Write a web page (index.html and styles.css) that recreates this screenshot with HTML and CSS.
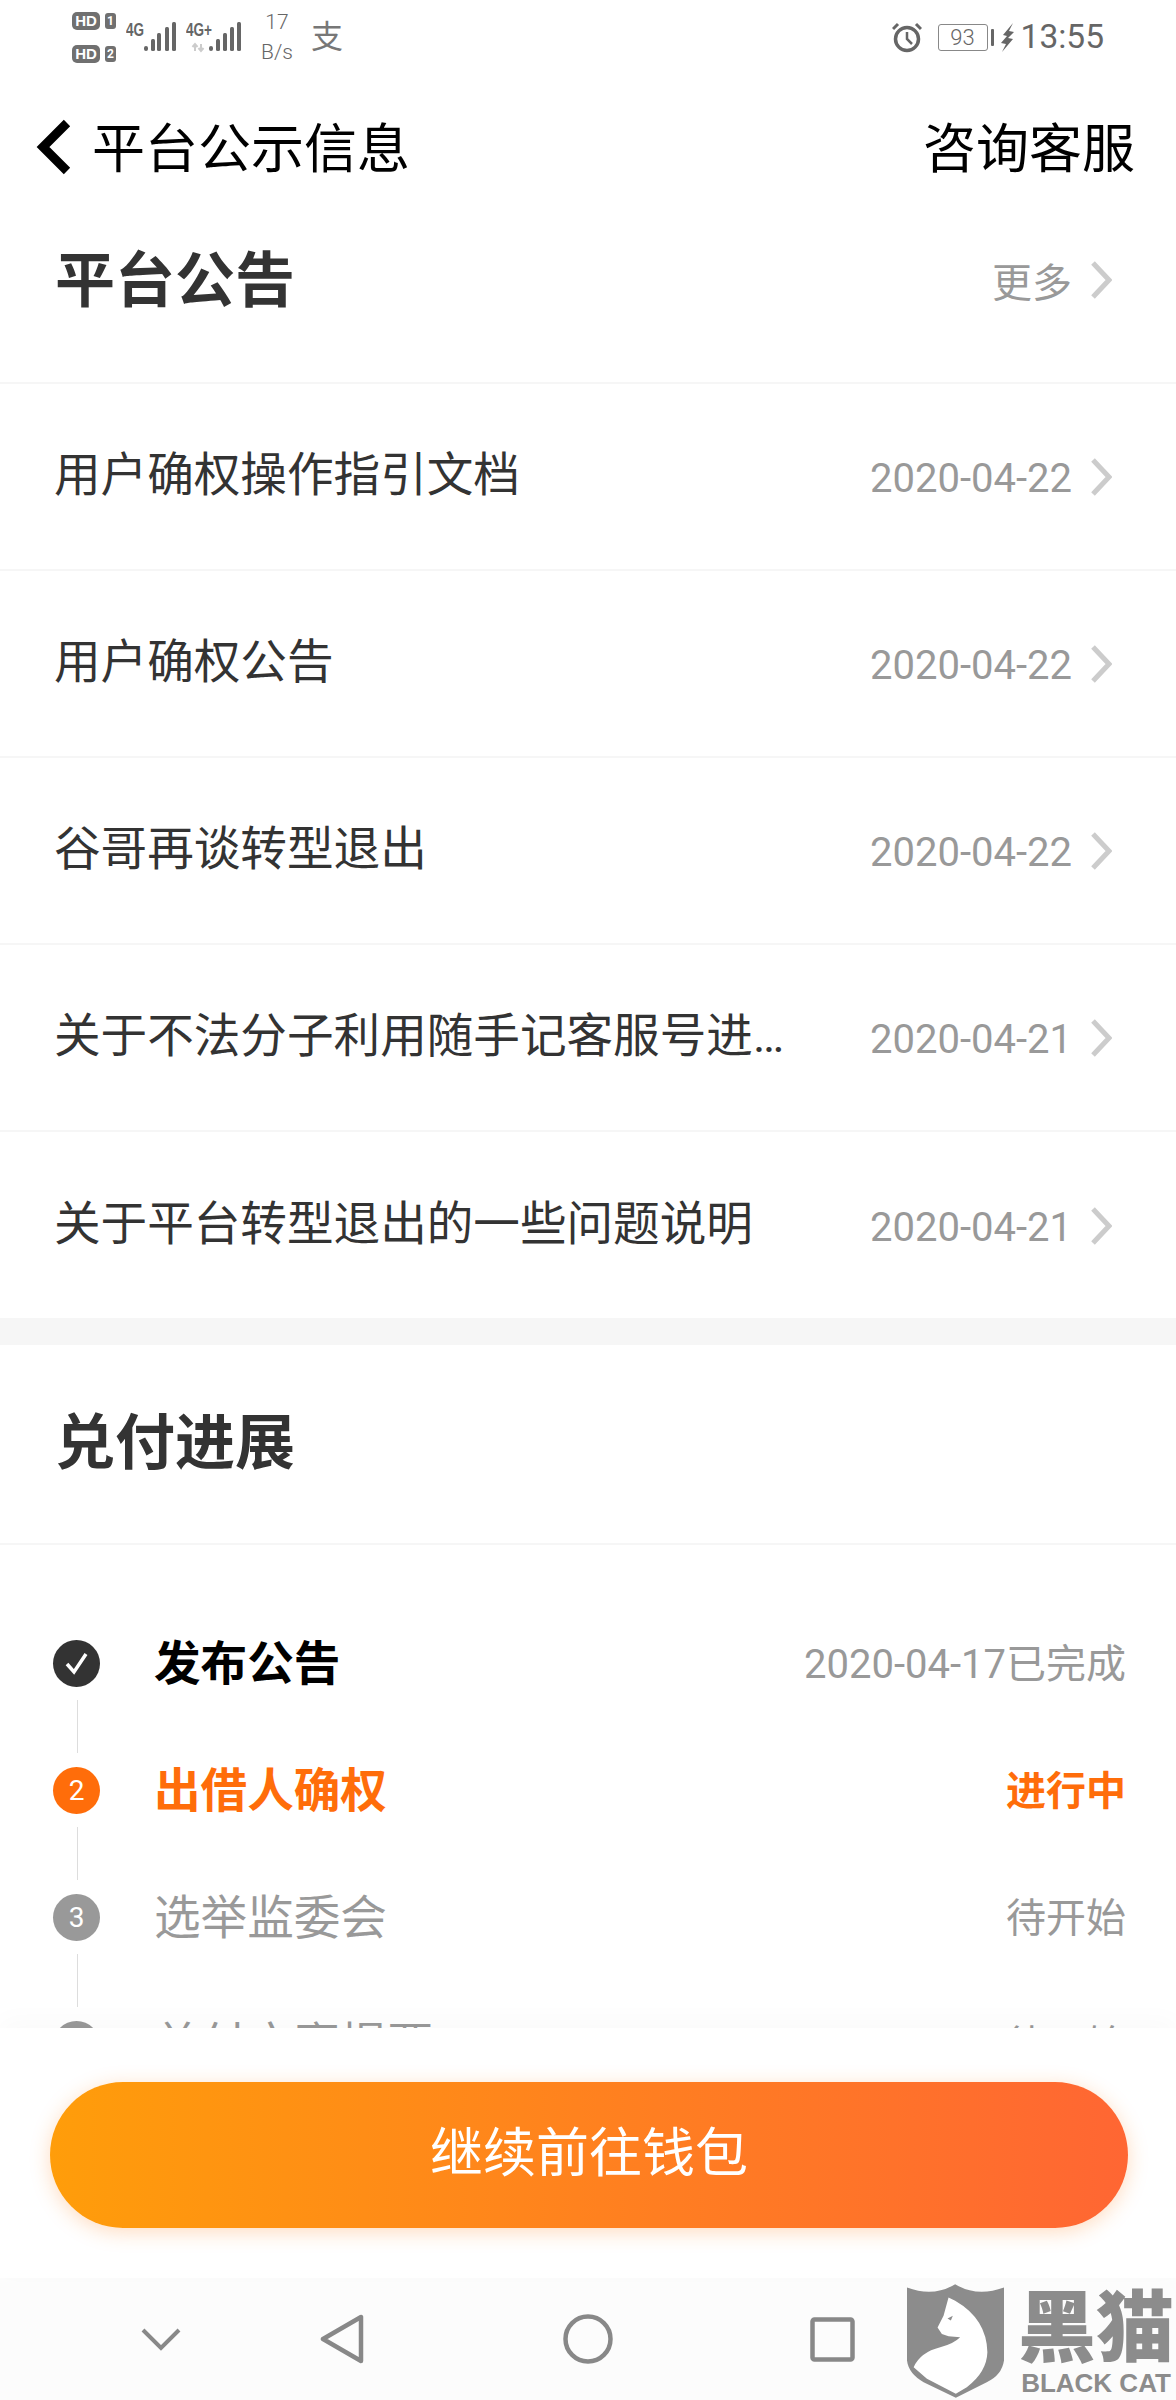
FILE: index.html
```html
<!DOCTYPE html>
<html>
<head>
    <meta charset="utf-8">
    <link rel="stylesheet" href="styles.css">
</head>
<body>
    <div class="screen">
        <div class="status-bar">
            <div class="status-left">
                <div class="hd-group">
                    <div class="hd-row"><span class="hd-badge">HD</span><span class="hd-num">1</span></div>
                    <div class="hd-row"><span class="hd-badge">HD</span><span class="hd-num">2</span></div>
                </div>
                <svg class="signal" width="50" height="32" viewBox="0 0 50 32">
                    <text x="0" y="15" class="signal-text" textLength="18" lengthAdjust="spacingAndGlyphs">4G</text>
                    <rect x="18" y="25" width="4" height="5" rx="2"/>
                    <rect x="25" y="18" width="4" height="12" rx="1.5"/>
                    <rect x="31" y="12" width="4" height="18" rx="1.5"/>
                    <rect x="39" y="6" width="4" height="24" rx="1.5"/>
                    <rect x="46" y="1" width="4" height="29" rx="1.5"/>
                </svg>
                <svg class="signal" width="56" height="32" viewBox="0 0 56 32">
                    <text x="0" y="15" class="signal-text" textLength="26" lengthAdjust="spacingAndGlyphs">4G+</text>
                    <path d="M9 30V23M6.500 26L9 23L11.500 26M15 23V30M12.500 27L15 30L17.500 27" fill="none" stroke="#ccc" stroke-width="2"/>
                    <rect x="23" y="25" width="4" height="5" rx="2"/>
                    <rect x="30" y="18" width="4" height="12" rx="1.500"/>
                    <rect x="37" y="12" width="4" height="18" rx="1.500"/>
                    <rect x="44" y="6" width="4" height="24" rx="1.500"/>
                    <rect x="51" y="1" width="4" height="29" rx="1.500"/>
                </svg>
                <div class="net-speed">17<br>B/s</div>
                <span class="alipay">支</span>
            </div>
            <div class="status-right">
                <svg class="alarm" width="30" height="32" viewBox="0 0 30 32" fill="none" stroke="#666">
                    <circle cx="15" cy="18" r="11.500" stroke-width="3.500"/>
                    <path d="M15 11V18L20 23" stroke-width="2.500"/>
                    <path d="M1 8L6 3M29 8L24 3" stroke-width="3"/>
                </svg>
                <div class="battery">93</div>
                <div class="battery-nub"></div>
                <svg class="bolt" width="13" height="29" viewBox="0 0 13 29">
                    <path d="M12 0L2 12L6 13L0 20L5 21L1 29L12 16L7 15L13 9L8 8Z" fill="#666"/>
                </svg>
                <span class="clock">13:55</span>
            </div>
        </div>

        <div class="nav-bar">
            <div class="nav-left">
                <svg class="back" width="36" height="56" viewBox="0 0 36 56" fill="none" stroke="#000" stroke-width="9">
                    <path d="M31 4L7 28L31 52"/>
                </svg>
                <span class="nav-title">平台公示信息</span>
            </div>
            <span class="nav-action">咨询客服</span>
        </div>

        <div class="content">
            <div class="section-head notice-head">
                <h2 class="section-title">平台公告</h2>
                <div class="row-right">
                    <span class="more">更多</span>
                    <svg class="arrow" width="22" height="38" viewBox="0 0 22 38"><path d="M3 2L19 19L3 36"/></svg>
                </div>
            </div>
            <div class="notice-row">
                <span class="notice-name">用户确权操作指引文档</span>
                <div class="row-right">
                    <span class="date">2020-04-22</span>
                    <svg class="arrow" width="22" height="38" viewBox="0 0 22 38"><path d="M3 2L19 19L3 36"/></svg>
                </div>
            </div>
            <div class="notice-row">
                <span class="notice-name">用户确权公告</span>
                <div class="row-right">
                    <span class="date">2020-04-22</span>
                    <svg class="arrow" width="22" height="38" viewBox="0 0 22 38"><path d="M3 2L19 19L3 36"/></svg>
                </div>
            </div>
            <div class="notice-row">
                <span class="notice-name">谷哥再谈转型退出</span>
                <div class="row-right">
                    <span class="date">2020-04-22</span>
                    <svg class="arrow" width="22" height="38" viewBox="0 0 22 38"><path d="M3 2L19 19L3 36"/></svg>
                </div>
            </div>
            <div class="notice-row">
                <span class="notice-name">关于不法分子利用随手记客服号进…</span>
                <div class="row-right">
                    <span class="date">2020-04-21</span>
                    <svg class="arrow" width="22" height="38" viewBox="0 0 22 38"><path d="M3 2L19 19L3 36"/></svg>
                </div>
            </div>
            <div class="notice-row last">
                <span class="notice-name">关于平台转型退出的一些问题说明</span>
                <div class="row-right">
                    <span class="date">2020-04-21</span>
                    <svg class="arrow" width="22" height="38" viewBox="0 0 22 38"><path d="M3 2L19 19L3 36"/></svg>
                </div>
            </div>

            <div class="divider"></div>

            <div class="section-head progress-head">
                <h2 class="section-title">兑付进展</h2>
            </div>
            <div class="steps">
                <div class="step done">
                    <div class="step-mark">
                        <div class="step-circle">
                            <svg width="24" height="24" viewBox="0 0 24 24" fill="none" stroke="#fff" stroke-width="3.500"><path d="M2 12L9 20L21 2"/></svg>
                        </div>
                        <div class="step-line"></div>
                    </div>
                    <div class="step-body">
                        <span class="step-name">发布公告</span>
                        <span class="step-state">2020-04-17已完成</span>
                    </div>
                </div>
                <div class="step active">
                    <div class="step-mark">
                        <div class="step-circle">2</div>
                        <div class="step-line"></div>
                    </div>
                    <div class="step-body">
                        <span class="step-name">出借人确权</span>
                        <span class="step-state">进行中</span>
                    </div>
                </div>
                <div class="step">
                    <div class="step-mark">
                        <div class="step-circle">3</div>
                        <div class="step-line"></div>
                    </div>
                    <div class="step-body">
                        <span class="step-name">选举监委会</span>
                        <span class="step-state">待开始</span>
                    </div>
                </div>
                <div class="step">
                    <div class="step-mark">
                        <div class="step-circle">4</div>
                        <div class="step-line"></div>
                    </div>
                    <div class="step-body">
                        <span class="step-name">兑付方案提要</span>
                        <span class="step-state">待开始</span>
                    </div>
                </div>
            </div>
        </div>

        <div class="bottom-panel">
            <div class="wallet-btn">继续前往钱包</div>
        </div>

        <div class="system-nav">
            <svg width="40" height="23" viewBox="0 0 40 23" fill="none" stroke="#888" stroke-width="4">
                <path d="M2 2L20 20L38 2"/>
            </svg>
            <svg width="44" height="50" viewBox="0 0 44 50" fill="none" stroke="#888" stroke-width="4.500" stroke-linejoin="round">
                <path d="M41 3V47L3 25Z"/>
            </svg>
            <svg width="50" height="50" viewBox="0 0 50 50" fill="none" stroke="#888" stroke-width="4.500">
                <circle cx="25" cy="25" r="22.500"/>
            </svg>
            <svg width="45" height="45" viewBox="0 0 45 45" fill="none" stroke="#888" stroke-width="4.500" stroke-linejoin="round">
                <rect x="2.500" y="2.500" width="40" height="40" rx="2"/>
            </svg>
        </div>

        <div class="watermark">
            <svg class="shield" width="97" height="114" viewBox="620 855 292 342">
                <path d="M620 865Q700 895 765 855Q830 895 912 865V1085Q905 1130 860 1150L767 1197L670 1150Q625 1125 620 1085Z" fill="#8c8c8c"/>
                <path d="M745 895L765 905Q860 960 862 1060Q860 1120 800 1165L767 1185L680 1140L640 1105Q660 1060 720 1045Q760 1035 780 1015L745 1012L725 1005L712 985L730 950Z" fill="#fff"/>
                <path d="M742 958L758 950L752 964Z" fill="#8c8c8c"/>
            </svg>
            <div class="watermark-text">
                <span class="watermark-cn">黑猫</span>
                <span class="watermark-en">BLACK CAT</span>
            </div>
        </div>
    </div>
</body>
</html>
```

FILE: styles.css
```css
body {
    margin: 0;
    background: #fff;
    font-family: Roboto, "Noto Sans CJK SC", sans-serif;
}

.screen {
    position: relative;
    display: flex;
    flex-direction: column;
    width: 1176px;
    height: 2400px;
    overflow: hidden;
    background: #fff;
}

/* status bar */
.status-bar {
    display: flex;
    justify-content: space-between;
    align-items: center;
    height: 74px;
    padding: 0 72px;
    color: #666;
    flex-shrink: 0;
}
.status-left, .status-right {
    display: flex;
    align-items: center;
}
.hd-group {
    display: flex;
    flex-direction: column;
    gap: 15px;
    margin-right: 10px;
}
.hd-row {
    display: flex;
    align-items: center;
    gap: 5px;
}
.hd-badge {
    width: 28px;
    height: 18px;
    border-radius: 5px;
    background: #707070;
    color: #fff;
    font-family: "Liberation Sans", sans-serif;
    font-size: 15px;
    font-weight: 700;
    line-height: 18px;
    text-align: center;
}
.hd-num {
    width: 11px;
    height: 16px;
    border-radius: 3px;
    background: #707070;
    color: #fff;
    font-size: 12px;
    font-weight: 700;
    line-height: 16px;
    text-align: center;
}
.signal {
    fill: #666;
    margin-right: 10px;
}
.signal-text {
    font-family: "Liberation Sans", sans-serif;
    font-size: 18px;
    font-weight: 700;
}
.net-speed {
    width: 36px;
    margin: 0 16px 0 7px;
    font-size: 21px;
    font-weight: 300;
    line-height: 30px;
    text-align: center;
}
.alipay {
    font-size: 32px;
    line-height: 36px;
    color: #777;
}
.alarm {
    margin-right: 16px;
}
.battery {
    width: 48px;
    height: 25px;
    border: 1.5px solid #888;
    border-radius: 3px;
    font-size: 22px;
    font-weight: 300;
    line-height: 25px;
    text-align: center;
}
.battery-nub {
    width: 3px;
    height: 17px;
    margin: 0 7px 0 3px;
    border-radius: 1px;
    background: #666;
}
.bolt {
    margin-right: 7px;
}
.clock {
    font-size: 33.5px;
    line-height: 40px;
}

/* title bar */
.nav-bar {
    display: flex;
    justify-content: space-between;
    align-items: center;
    height: 146px;
    padding: 0 41px 0 36px;
    color: #000;
    font-size: 53px;
    flex-shrink: 0;
}
.nav-left {
    display: flex;
    align-items: center;
    gap: 20px;
}
.nav-title, .nav-action {
    margin-bottom: 4px;
}

/* lists */
.content {
    flex: 1;
    min-height: 0;
    overflow: hidden;
}
.section-head {
    display: flex;
    justify-content: space-between;
    align-items: center;
    padding: 0 64px 0 55px;
    border-bottom: 2px solid #f6f6f6;
    box-sizing: border-box;
}
.notice-head {
    height: 164px;
    padding-bottom: 42px;
}
.progress-head {
    height: 200px;
    padding-bottom: 4px;
}
.section-title {
    margin: 4px 0 0;
    color: #333;
    font-size: 60px;
    font-weight: 700;
    line-height: 80px;
}
.row-right {
    display: flex;
    align-items: center;
    gap: 18px;
}
.more {
    color: #999;
    font-size: 40px;
}
.date {
    padding-top: 4px;
    color: #999;
    font-size: 40px;
}
.arrow {
    fill: none;
    stroke: #ccc;
    stroke-width: 5px;
}
.notice-row {
    display: flex;
    justify-content: space-between;
    align-items: center;
    height: 187px;
    padding: 0 64px 0 54px;
    border-bottom: 2px solid #f6f6f6;
    box-sizing: border-box;
}
.notice-row.last {
    border-bottom: none;
}
.notice-name {
    margin-bottom: 12px;
    color: #333;
    font-size: 46.6px;
}
.divider {
    height: 27px;
    margin-top: -1px;
    background: #f6f6f6;
}

/* progress steps */
.steps {
    padding: 95px 50px 0 53px;
}
.step {
    display: flex;
    gap: 54px;
}
.step-mark {
    display: flex;
    flex-direction: column;
    align-items: center;
    width: 47px;
    flex-shrink: 0;
}
.step-circle {
    display: flex;
    justify-content: center;
    align-items: center;
    width: 47px;
    height: 47px;
    border-radius: 50%;
    background: #999;
    color: #fff;
    font-size: 28px;
}
.step-line {
    width: 1px;
    height: 53px;
    margin: 13px 0 14px 2px;
    background: #ddd;
}
.step-body {
    flex: 1;
    display: flex;
    justify-content: space-between;
    align-items: center;
    height: 47px;
}
.step-name {
    margin-bottom: 9px;
    color: #999;
    font-size: 46.6px;
}
.step-state {
    margin-bottom: 5px;
    color: #999;
    font-size: 40px;
}
.done .step-circle {
    background: #333;
}
.done .step-name {
    color: #000;
    font-weight: 700;
}
.active .step-circle {
    background: #ff6d0a;
}
.active .step-name, .active .step-state {
    color: #ff6d0a;
    font-weight: 700;
}

/* bottom */
.bottom-panel {
    position: relative;
    height: 250px;
    padding: 54px 48px 0 50px;
    box-sizing: border-box;
    background: #fff;
    box-shadow: 0 -8px 24px rgba(0, 0, 0, 0.025);
    flex-shrink: 0;
}
.wallet-btn {
    height: 146px;
    border-radius: 73px;
    background: linear-gradient(to right, #ff9d0a, #ff6633);
    box-shadow: 0 4px 20px rgba(255, 130, 30, 0.28);
    color: #fff;
    font-size: 53px;
    line-height: 144px;
    text-align: center;
}
.system-nav {
    display: grid;
    grid-template-columns: 179px 243px 247px 45px;
    align-items: center;
    height: 122px;
    padding-left: 141px;
    box-sizing: border-box;
    background: #fcfcfc;
    flex-shrink: 0;
}

/* watermark sits on top of the page */
.watermark {
    position: absolute;
    right: 4px;
    bottom: 2px;
    display: flex;
    align-items: flex-start;
    gap: 16px;
}
.watermark-text {
    display: flex;
    flex-direction: column;
    align-items: center;
    width: 152px;
    padding-top: 6px;
    color: #8c8c8c;
    white-space: nowrap;
}
.watermark-cn {
    font-size: 78px;
    font-weight: 900;
    line-height: 80px;
}
.watermark-en {
    font-family: "Liberation Sans", sans-serif;
    font-size: 26px;
    font-weight: 700;
    line-height: 26px;
}
```
